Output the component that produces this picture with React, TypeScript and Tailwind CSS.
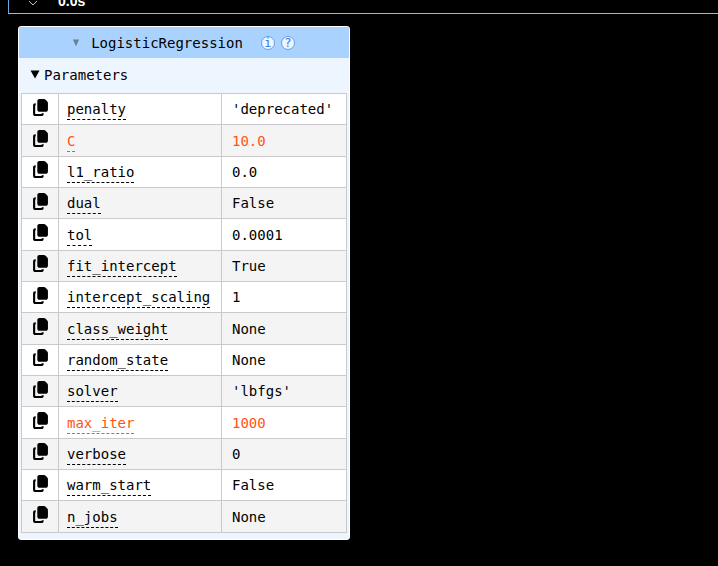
import React from 'react';

interface Param {
  name: string;
  value: string;
  changed?: boolean;
}

const params: Param[] = [
  { name: 'penalty', value: "'deprecated'" },
  { name: 'C', value: '10.0', changed: true },
  { name: 'l1_ratio', value: '0.0' },
  { name: 'dual', value: 'False' },
  { name: 'tol', value: '0.0001' },
  { name: 'fit_intercept', value: 'True' },
  { name: 'intercept_scaling', value: '1' },
  { name: 'class_weight', value: 'None' },
  { name: 'random_state', value: 'None' },
  { name: 'solver', value: "'lbfgs'" },
  { name: 'max_iter', value: '1000', changed: true },
  { name: 'verbose', value: '0' },
  { name: 'warm_start', value: 'False' },
  { name: 'n_jobs', value: 'None' },
];

const CopyIcon: React.FC = () => (
  <svg viewBox="0 0 448 512" className="w-[15px] h-[17px]" fill="currentColor" aria-hidden="true">
    <path d="M192 0c-35.3 0-64 28.7-64 64l0 256c0 35.3 28.7 64 64 64l192 0c35.3 0 64-28.7 64-64l0-200.6c0-17.4-7.1-34.1-19.7-46.2L370.6 17.8C358.7 6.4 342.8 0 326.3 0L192 0zM64 128c-35.3 0-64 28.7-64 64L0 448c0 35.3 28.7 64 64 64l192 0c35.3 0 64-28.7 64-64l0-16-64 0 0 16-192 0 0-256 16 0 0-64-16 0z" />
  </svg>
);

const CellStatus: React.FC = () => (
  <div className="ml-2 h-[14px] flex items-end overflow-hidden border-l border-b border-b-[#b5b5b5] border-l-[#6ea5de] pb-1 pl-[19px] text-white">
    <svg viewBox="0 0 10 10" className="shrink-0 w-[10px] h-[10px] mb-[2px] mr-5" fill="none" stroke="#c4c4c4" aria-hidden="true">
      <path d="M1 4l4 4 4-4" />
    </svg>
    <span className="shrink-0 font-['Liberation_Sans',sans-serif] text-[14px] leading-4 font-bold">0.0s</span>
  </div>
);

const Badge: React.FC<{ label: string; children: React.ReactNode }> = ({ label, children }) => (
  <a
    href="#"
    aria-label={label}
    className="flex items-center justify-center w-[14px] h-[14px] rounded-full border border-[#6b9cf0] bg-[#edf5ff] text-[#3b74e6] text-[12px] leading-3"
  >
    {children}
  </a>
);

const ParamRow: React.FC<{ param: Param }> = ({ param }) => (
  <tr className={param.changed ? 'odd:bg-white even:bg-[#f4f4f5] text-[#ff5414]' : 'odd:bg-white even:bg-[#f4f4f5]'}>
    <td className="w-[37px] border border-[#c9c9ce] p-0 text-center">
      <button type="button" aria-label={`Copy ${param.name}`} className="block mx-auto pb-1 text-black">
        <CopyIcon />
      </button>
    </td>
    <td className="w-[163px] border border-[#c9c9ce] px-2 py-1">
      <a href="#" className="border-b border-dashed border-current pb-[2px]">
        {param.name}
      </a>
    </td>
    <td className="border border-[#c9c9ce] px-[10px] py-1">{param.value}</td>
  </tr>
);

export default function App() {
  return (
    <div className="min-h-screen bg-black text-black font-['DejaVu_Sans_Mono',monospace] text-[14px] leading-[22px]">
      <CellStatus />
      <div className="mt-3 ml-[18px] w-[332px] max-w-full rounded-[3px] border border-white bg-[#edf5ff] overflow-hidden">
        <div className="flex items-center justify-center h-[31px] bg-[#a9d3fe]">
          <button type="button" className="flex items-center">
            <svg viewBox="0 0 6 8" className="w-[6px] h-[8px] mr-3" fill="#6c7f91" aria-hidden="true">
              <path d="M0 0.5h6L3 7.5z" />
            </svg>
            LogisticRegression
          </button>
          <div className="flex gap-[6px] ml-[18px]">
            <Badge label="Status">i</Badge>
            <Badge label="Documentation">?</Badge>
          </div>
        </div>
        <details open className="px-[2px] pb-[6px]">
          <summary className="flex items-center h-[35px] pl-[9px] pb-[2px]">
            <svg viewBox="0 0 10 9" className="w-[10px] h-[9px] mr-1" aria-hidden="true">
              <path d="M0.5 0.5h9L5 8.5z" />
            </svg>
            Parameters
          </summary>
          <table className="w-full h-[440px] border-collapse">
            <tbody>
              {params.map((param) => (
                <ParamRow key={param.name} param={param} />
              ))}
            </tbody>
          </table>
        </details>
      </div>
    </div>
  );
}
